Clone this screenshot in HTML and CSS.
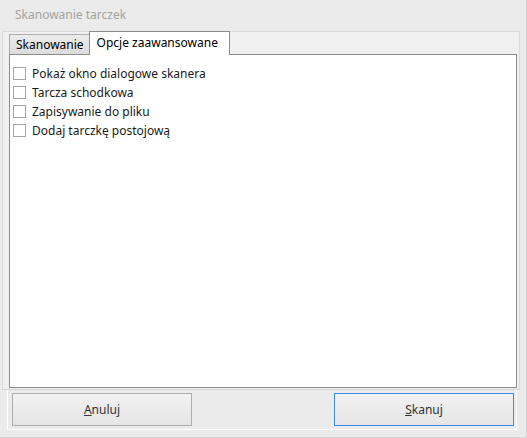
FILE: index.html
```html
<!DOCTYPE html>
<html lang="pl">
<head>
    <meta charset="UTF-8">
    <title>Skanowanie tarczek</title>
    <link rel="stylesheet" href="styles.css">
</head>
<body>

    <div class="dialog">
        <div class="title">Skanowanie tarczek</div>

        <!-- Tab control -->
        <div class="tab-group">
            <div class="tab-strip">
                <div class="tab">Skanowanie</div>
                <div class="tab active">Opcje zaawansowane</div>
            </div>
            <div class="tab-page">
                <label class="check"><span class="box"></span>Pokaż okno dialogowe skanera</label>
                <label class="check"><span class="box"></span>Tarcza schodkowa</label>
                <label class="check"><span class="box"></span>Zapisywanie do pliku</label>
                <label class="check"><span class="box"></span>Dodaj tarczkę postojową</label>
            </div>
        </div>

        <!-- Bottom button bar -->
        <div class="footer">
            <button class="btn"><u>A</u>nuluj</button>
            <button class="btn default"><u>S</u>kanuj</button>
        </div>
    </div>

</body>
</html>
```

FILE: styles.css
```css
html, body { margin: 0; padding: 0; }
body { font-family: "Segoe UI", "Noto Sans", sans-serif; font-size: 12px; background: #ebebeb; }

.dialog { width: 527px; height: 438px; box-sizing: border-box; display: flex; flex-direction: column; border-right: 1px solid #d2d2d2; border-bottom: 1px solid #d2d2d2; padding-bottom: 7px; }
.title { height: 31px; line-height: 30px; padding-left: 15px; color: #a3a3a3; }

.tab-group { flex: 1; display: flex; flex-direction: column; margin: 0 6px 0 2px; padding: 0 2px 1px 6px; background: #f0f0f0; border: 1px solid #dadada; border-bottom-color: #d4d4d4; border-top: none; box-shadow: inset 0 1px 0 #dadada; }
.tab-strip { display: flex; align-items: flex-end; height: 23px; position: relative; z-index: 1; }
.tab { height: 20px; line-height: 19px; box-sizing: border-box; padding: 0 5px 0 6px; border: 1px solid #acacac; border-bottom: none; background: linear-gradient(#ececec, #dcdcdc); color: #000; }
.tab.active { height: 24px; line-height: 22px; padding: 0 11px 0 7px; background: #fff; border-color: #8c8c8c; margin-left: -1px; margin-bottom: -1px; }

.tab-page { flex: 1; background: #fff; border: 1px solid #8c8c8c; padding: 9px 0 0 3px; }
.check { display: flex; align-items: center; height: 19px; color: #1a1a1a; }
.box { width: 11px; height: 11px; border: 1px solid #a6a6a6; background: #fff; margin-right: 6px; }

.footer { display: flex; justify-content: space-between; margin: 0 9px 0 7px; padding: 3px 2px 3px 4px; border: 1px solid #fff; border-top: none; }
.btn { width: 180px; height: 33px; font-family: inherit; font-size: 12px; color: #333; border: 1px solid #adadad; background: linear-gradient(#f2f2f2, #e5e5e5); padding: 0; }
.btn.default { border-color: #3c8ee8; }
```
